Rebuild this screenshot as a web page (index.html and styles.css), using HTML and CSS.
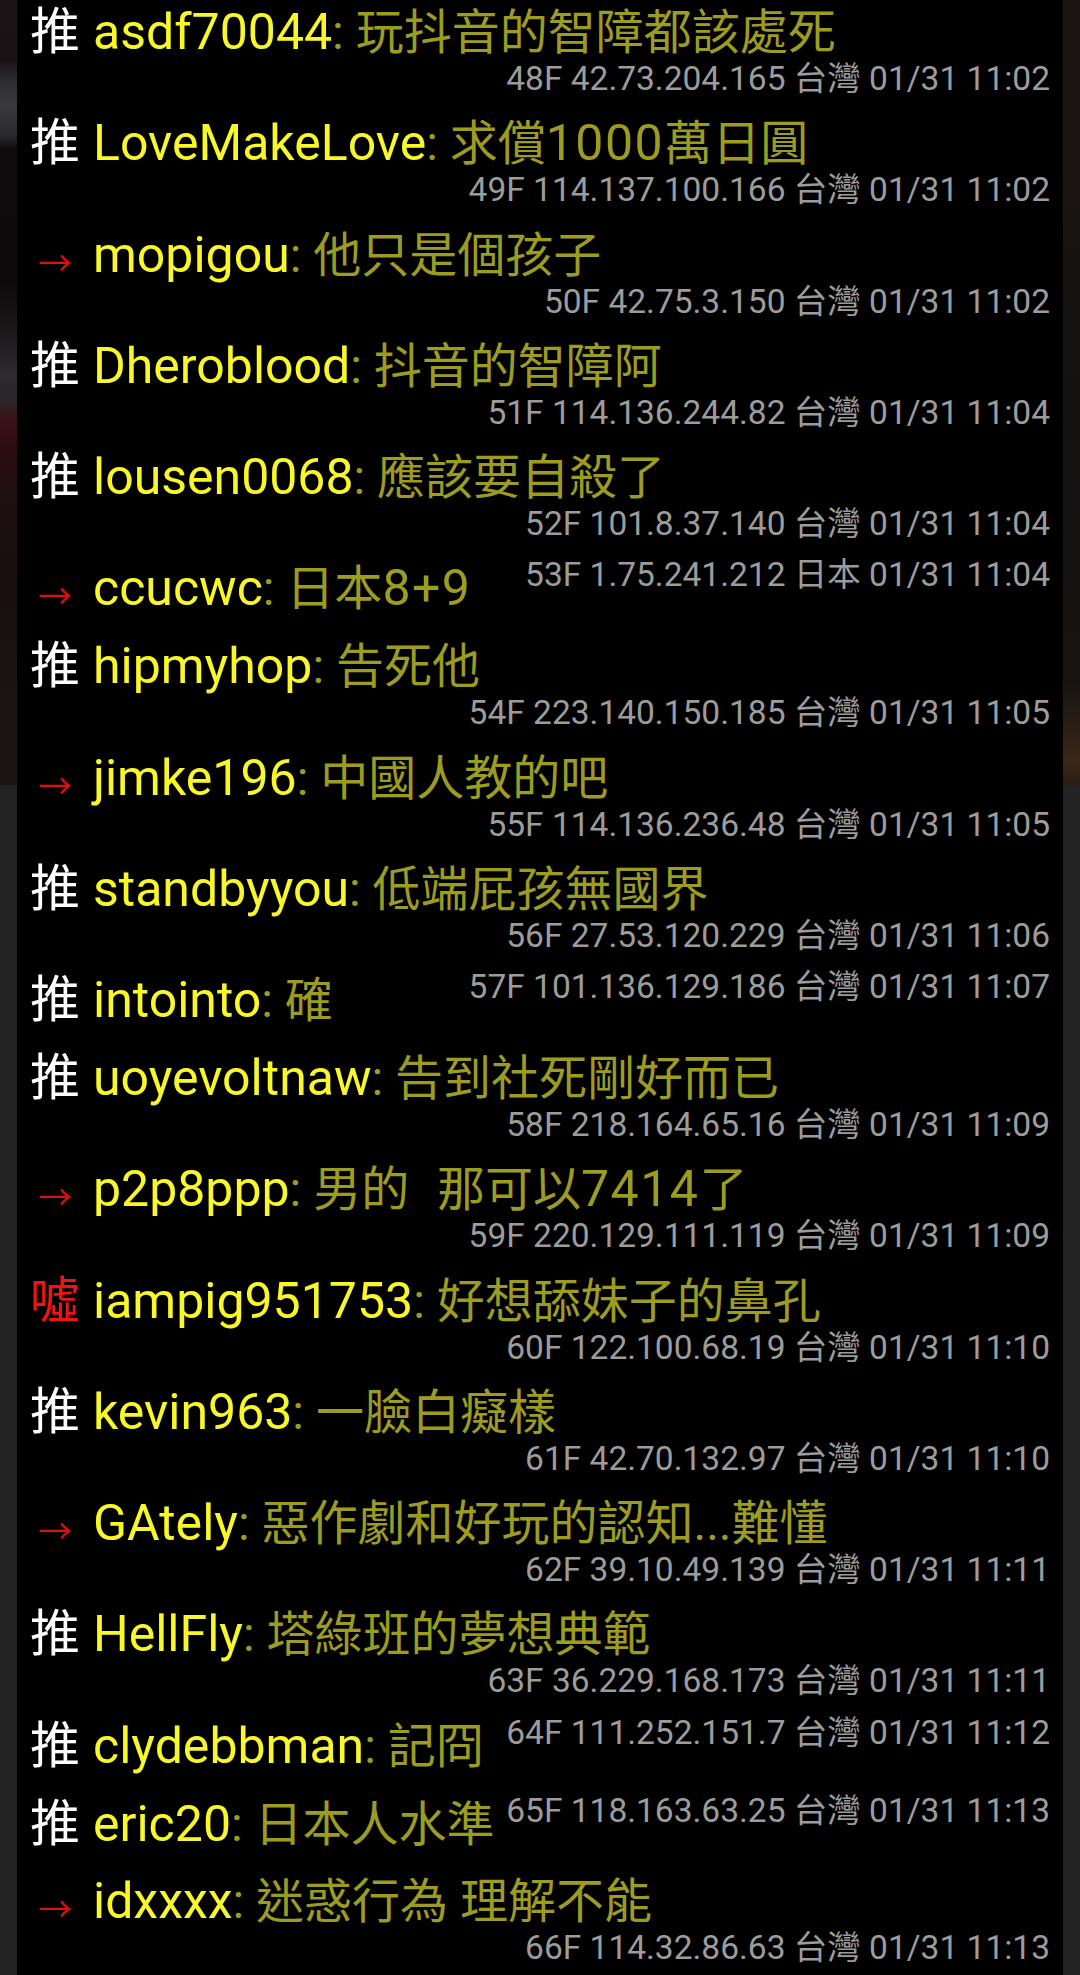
FILE: index.html
```html
<!DOCTYPE html>
<html lang="zh-Hant">
<head>
<meta charset="utf-8">
<title>推文</title>
<link rel="stylesheet" href="styles.css">
</head>
<body>
<main class="panel">
  <div class="row stack"><div class="line"><span class="tag push">推</span><span class="user">asdf70044</span><span class="text">: 玩抖音的智障都該處死</span></div><div class="meta">48F 42.73.204.165 台灣 01/31 11:02</div></div>
  <div class="row stack"><div class="line"><span class="tag push">推</span><span class="user">LoveMakeLove</span><span class="text">: 求償<span class="n">1000</span>萬日圓</span></div><div class="meta">49F 114.137.100.166 台灣 01/31 11:02</div></div>
  <div class="row stack"><div class="line"><span class="tag arrow"><span class="arr">→</span></span><span class="user">mopigou</span><span class="text">: 他只是個孩子</span></div><div class="meta">50F 42.75.3.150 台灣 01/31 11:02</div></div>
  <div class="row stack"><div class="line"><span class="tag push">推</span><span class="user">Dheroblood</span><span class="text">: 抖音的智障阿</span></div><div class="meta">51F 114.136.244.82 台灣 01/31 11:04</div></div>
  <div class="row stack"><div class="line"><span class="tag push">推</span><span class="user">lousen0068</span><span class="text">: 應該要自殺了</span></div><div class="meta">52F 101.8.37.140 台灣 01/31 11:04</div></div>
  <div class="row single"><div class="line"><span class="tag arrow"><span class="arr">→</span></span><span class="user">ccucwc</span><span class="text">: 日本<span class="n">8+9</span></span></div><div class="meta">53F 1.75.241.212 日本 01/31 11:04</div></div>
  <div class="row stack"><div class="line"><span class="tag push">推</span><span class="user">hipmyhop</span><span class="text">: 告死他</span></div><div class="meta">54F 223.140.150.185 台灣 01/31 11:05</div></div>
  <div class="row stack"><div class="line"><span class="tag arrow"><span class="arr">→</span></span><span class="user">jimke196</span><span class="text">: 中國人教的吧</span></div><div class="meta">55F 114.136.236.48 台灣 01/31 11:05</div></div>
  <div class="row stack"><div class="line"><span class="tag push">推</span><span class="user">standbyyou</span><span class="text">: 低端屁孩無國界</span></div><div class="meta">56F 27.53.120.229 台灣 01/31 11:06</div></div>
  <div class="row single"><div class="line"><span class="tag push">推</span><span class="user">intointo</span><span class="text">: 確</span></div><div class="meta">57F 101.136.129.186 台灣 01/31 11:07</div></div>
  <div class="row stack"><div class="line"><span class="tag push">推</span><span class="user">uoyevoltnaw</span><span class="text">: 告到社死剛好而已</span></div><div class="meta">58F 218.164.65.16 台灣 01/31 11:09</div></div>
  <div class="row stack"><div class="line"><span class="tag arrow"><span class="arr">→</span></span><span class="user">p2p8ppp</span><span class="text">: 男的<span class="n">  </span>那可以<span class="n">7414</span>了</span></div><div class="meta">59F 220.129.111.119 台灣 01/31 11:09</div></div>
  <div class="row stack"><div class="line"><span class="tag boo">噓</span><span class="user">iampig951753</span><span class="text">: 好想舔妹子的鼻孔</span></div><div class="meta">60F 122.100.68.19 台灣 01/31 11:10</div></div>
  <div class="row stack"><div class="line"><span class="tag push">推</span><span class="user">kevin963</span><span class="text">: 一臉白癡樣</span></div><div class="meta">61F 42.70.132.97 台灣 01/31 11:10</div></div>
  <div class="row stack"><div class="line"><span class="tag arrow"><span class="arr">→</span></span><span class="user">GAtely</span><span class="text">: 惡作劇和好玩的認知<span class="dots">...</span>難懂</span></div><div class="meta">62F 39.10.49.139 台灣 01/31 11:11</div></div>
  <div class="row stack"><div class="line"><span class="tag push">推</span><span class="user">HellFly</span><span class="text">: 塔綠班的夢想典範</span></div><div class="meta">63F 36.229.168.173 台灣 01/31 11:11</div></div>
  <div class="row single"><div class="line"><span class="tag push">推</span><span class="user">clydebbman</span><span class="text">: 記冏</span></div><div class="meta">64F 111.252.151.7 台灣 01/31 11:12</div></div>
  <div class="row single"><div class="line"><span class="tag push">推</span><span class="user">eric20</span><span class="text">: 日本人水準</span></div><div class="meta">65F 118.163.63.25 台灣 01/31 11:13</div></div>
  <div class="row stack"><div class="line"><span class="tag arrow"><span class="arr">→</span></span><span class="user">idxxxx</span><span class="text">: 迷惑行為 理解不能</span></div><div class="meta">66F 114.32.86.63 台灣 01/31 11:13</div></div>
</main>
</body>
</html>
```
FILE: styles.css
```css
html, body {
  margin: 0;
  padding: 0;
  overflow: hidden;
}

body {
  height: 1975px;
  background-color: #232323;
  background-image:
    linear-gradient(to bottom,
      #1b1316 0, #1a1315 60px,
      #2c2b2f 80px, #3a393d 105px, #2a292c 135px,
      #0f0b0c 150px, #0e0a0b 280px,
      #1b1719 330px, #2d2b2f 375px, #2a2629 400px,
      #3a1216 420px, #2c0c10 450px,
      #1e0f10 500px, #170f10 600px,
      #1b1414 700px, #1a1414 785px,
      #232323 785px, #232323 100%),
    linear-gradient(to bottom,
      #1a1512 0, #1a1512 200px,
      #151210 260px, #141212 500px,
      #161310 680px, #2e2016 735px, #3a2818 760px, #2a1d14 785px,
      #232323 785px, #232323 100%);
  background-size: 17px 100%, 17px 100%;
  background-position: left top, right top;
  background-repeat: no-repeat;
  font-family: Roboto, "Noto Sans CJK TC", sans-serif;
}

.panel {
  margin: 0 17px;
  min-height: 1975px;
  background: #000;
}

.row {
  display: flex;
  flex-wrap: wrap;
  align-items: flex-start;
  padding: 2px 13px 15.8px 13px;
}

.row.single {
  flex-wrap: nowrap;
}

.line {
  flex: 0 0 auto;
  font-size: 50px;
  line-height: 50px;
  height: 50px;
  margin-bottom: 10px;
  white-space: pre;
  color: #9c9c20;
}

.tag {
  display: inline-block;
  width: 50px;
  margin-right: 13px;
  text-align: center;
  font-family: "Noto Sans CJK TC", sans-serif;
}

.push {
  color: #ffffff;
}

.boo {
  color: #ee1414;
}

.arrow {
  color: #dd1010;
}

.arr {
  font-size: 34px;
  vertical-align: -4px;
}

.user {
  color: #f7f72a;
}

.text {
  font-size: 48px;
  color: #9c9c20;
}

.text .n {
  font-size: 50px;
  letter-spacing: 1.5px;
}

.text .dots {
  font-size: 48px;
}

.meta {
  margin-left: auto;
  font-size: 33.5px;
  line-height: 33.5px;
  color: #9c9c9c;
  white-space: nowrap;
  text-align: right;
}

.row.stack .meta {
  flex-basis: 100%;
}
```
